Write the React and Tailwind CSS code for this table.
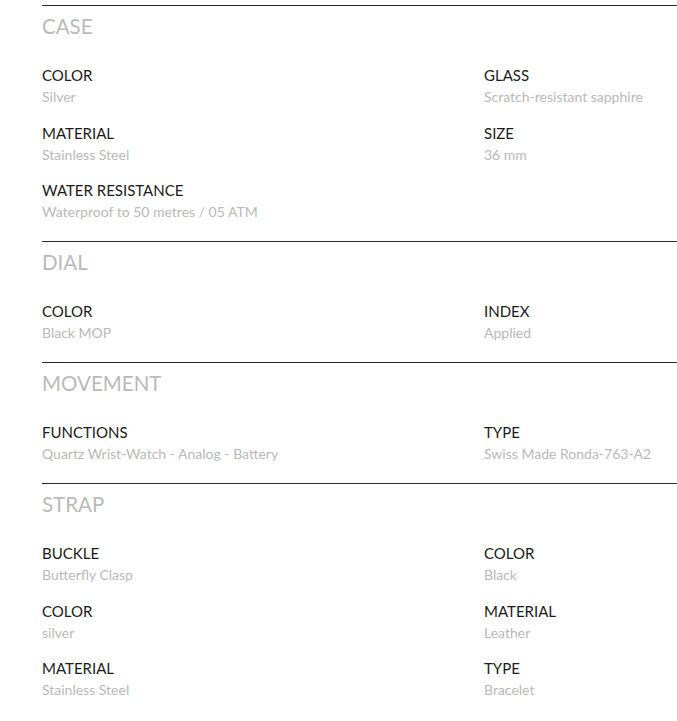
import React from "react";

const sections = [
  {
    title: "CASE",
    specs: [
      { label: "COLOR", value: "Silver" },
      { label: "GLASS", value: "Scratch-resistant sapphire" },
      { label: "MATERIAL", value: "Stainless Steel" },
      { label: "SIZE", value: "36 mm" },
      { label: "WATER RESISTANCE", value: "Waterproof to 50 metres / 05 ATM" },
    ],
  },
  {
    title: "DIAL",
    specs: [
      { label: "COLOR", value: "Black MOP" },
      { label: "INDEX", value: "Applied" },
    ],
  },
  {
    title: "MOVEMENT",
    specs: [
      { label: "FUNCTIONS", value: "Quartz Wrist-Watch - Analog - Battery" },
      { label: "TYPE", value: "Swiss Made Ronda-763-A2" },
    ],
  },
  {
    title: "STRAP",
    specs: [
      { label: "BUCKLE", value: "Butterfly Clasp" },
      { label: "COLOR", value: "Black" },
      { label: "COLOR", value: "silver" },
      { label: "MATERIAL", value: "Leather" },
      { label: "MATERIAL", value: "Stainless Steel" },
      { label: "TYPE", value: "Bracelet" },
    ],
  },
];

function SpecItem({ label, value }) {
  return (
    <div>
      <p className="text-[15px] leading-[20px] text-[#1b1b1b]">{label}</p>
      <p className="mt-px text-[14px] leading-[21px] text-[#b9b9b9]">
        {value}
      </p>
    </div>
  );
}

function SpecSection({ title, specs }) {
  return (
    <section className="border-t border-[#2a2a2a] pb-[19px]">
      <h2 className="pt-[6px] text-[20.5px] leading-[28px] text-[#bababa]">
        {title}
      </h2>

      <div className="mt-[25px] grid grid-cols-[442px_1fr] gap-y-[15.5px]">
        {specs.map((item, index) => (
          <SpecItem key={index} label={item.label} value={item.value} />
        ))}
      </div>
    </section>
  );
}

export default function App() {
  return (
    <div
      className="min-h-screen bg-white pl-[42px] pt-[5px]"
      style={{ fontFamily: "Lato, 'Open Sans', sans-serif" }}
    >
      {sections.map((section) => (
        <SpecSection
          key={section.title}
          title={section.title}
          specs={section.specs}
        />
      ))}
    </div>
  );
}
